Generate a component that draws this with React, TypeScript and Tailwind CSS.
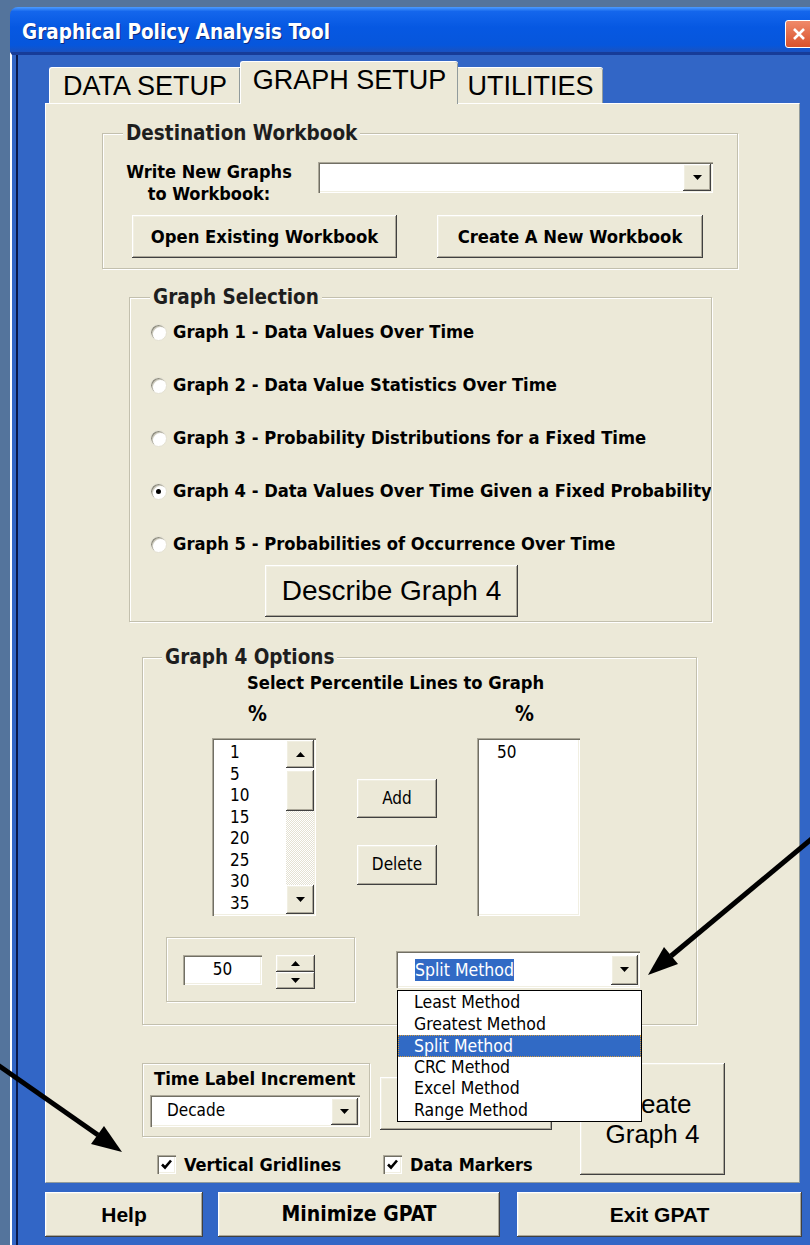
import React from "react";

const TAH = "font-['DejaVu_Sans_Condensed','DejaVu_Sans',sans-serif]";
const ARIAL = "font-['Liberation_Sans',Arial,sans-serif]";
const RAISED =
  "bg-[#ece9d8] shadow-[inset_-1px_-1px_#404040,inset_1px_1px_#ffffff,inset_-2px_-2px_#aca899,inset_2px_2px_#f1efe2]";
const SUNKEN =
  "bg-white shadow-[inset_1px_1px_#aca899,inset_2px_2px_#716f64,inset_-1px_-1px_#ffffff,inset_-2px_-2px_#f1efe2]";
const ETCHED = "border border-[#c3c0ae] shadow-[inset_1px_1px_#ffffff,1px_1px_#ffffff]";

function Tri({ up = false }: { up?: boolean }) {
  return (
    <svg width="9" height="5" viewBox="0 0 9 5">
      <path d={up ? "M0 5h9L4.5 0z" : "M0 0h9L4.5 5z"} fill="#000" />
    </svg>
  );
}

function Btn({ className = "", children }: { className?: string; children?: React.ReactNode }) {
  return <div className={`${RAISED} flex items-center justify-center text-black ${className}`}>{children}</div>;
}

function Group({
  className,
  legend,
  legendPos,
  children,
}: {
  className: string;
  legend: string;
  legendPos: string;
  children: React.ReactNode;
}) {
  return (
    <div className={`relative ${ETCHED} ${className}`}>
      <div
        className={`absolute -top-[12px] ${legendPos} px-[3px] bg-[#ece9d8] ${TAH} font-bold text-[20.5px] leading-[22px] text-[#1e1e1e]`}
      >
        {legend}
      </div>
      {children}
    </div>
  );
}

function Radio({ on = false }: { on?: boolean }) {
  return (
    <div className="w-[17px] h-[17px] rounded-full bg-white shadow-[inset_1px_1px_#8f8d80,inset_2px_2px_#cfcdc0,inset_-1px_-1px_#ffffff] border border-[#e4e1d2] flex items-center justify-center shrink-0">
      {on && <div className="w-[5px] h-[5px] rounded-full bg-black" />}
    </div>
  );
}

function Check() {
  return (
    <div className={`${SUNKEN} w-[19px] h-[19px] flex items-center justify-center shrink-0`}>
      <svg width="13" height="13" viewBox="0 0 13 13">
        <path d="M2 6.5 L5 9.5 L11 2.5" stroke="#000" strokeWidth="2.6" fill="none" />
      </svg>
    </div>
  );
}

const graphs = [
  "Graph 1 - Data Values Over Time",
  "Graph 2 - Data Value Statistics Over Time",
  "Graph 3 - Probability Distributions for a Fixed Time",
  "Graph 4 - Data Values Over Time Given a Fixed Probability",
  "Graph 5 - Probabilities of Occurrence Over Time",
];

const percentiles = ["1", "5", "10", "15", "20", "25", "30", "35"];

const methods = ["Least Method", "Greatest Method", "Split Method", "CRC Method", "Excel Method", "Range Method"];

export default function App() {
  return (
    <div className="relative w-[810px] h-[1245px] overflow-hidden bg-[#54749c]">
      <div className="ml-[10px] mt-[7px] w-[800px]">
        {/* title bar */}
        <div className="flex items-center h-[45px] rounded-tl-[8px] pl-[12px] bg-[linear-gradient(to_bottom,#4d9cff_0%,#1466ec_10%,#0658e2_45%,#0656dc_85%,#1a52c0_100%)]">
          <span className={`${TAH} font-bold text-[20.5px] pt-[6px] text-white [text-shadow:1px_1px_#0b2a80]`}>
            Graphical Policy Analysis Tool
          </span>
          <div className="ml-auto mt-[9px] -mr-[3px] w-[28px] h-[28px] rounded-[3px] border border-white bg-[linear-gradient(to_bottom,#f08a6a,#d8512c)] flex items-center justify-center">
            <svg width="14" height="14" viewBox="0 0 14 14">
              <path d="M2 2 L12 12 M12 2 L2 12" stroke="#fff" strokeWidth="2.6" />
            </svg>
          </div>
        </div>

        {/* window frame */}
        <div className="border-l-2 border-l-white border-t-[3px] border-t-[#173c98] bg-[#3266c6] pl-[4px] h-[1200px]">
          <div className="border-l-2 border-l-[#0b1a4a] h-full pl-[27px]">
            {/* tabs */}
            <div className={`flex items-end ml-[4px] pt-[6px] h-[48px] ${ARIAL} text-[27px] text-black`}>
              <div className="w-[191px] h-[36px] bg-[#ece9d8] border-t border-l border-white shadow-[inset_-1px_0_#919b9c] rounded-tl-[3px] flex items-center justify-center pt-[2px]">
                DATA SETUP
              </div>
              <div className="relative top-[1px] z-10 w-[218px] h-[43px] bg-[#ece9d8] border-t border-l border-white shadow-[inset_-1px_0_#919b9c] rounded-t-[3px] flex items-center justify-center pb-[5px]">
                GRAPH SETUP
              </div>
              <div className="w-[145px] h-[36px] bg-[#ece9d8] border-t border-white shadow-[inset_-1px_0_#919b9c] rounded-tr-[3px] flex items-center justify-center pt-[2px]">
                UTILITIES
              </div>
            </div>

            {/* tab page */}
            <div className="w-[755px] h-[1080px] bg-[#ece9d8] border-t border-l border-white border-r border-b border-r-[#919b9c] border-b-[#919b9c] flex flex-col items-start">
              {/* destination workbook */}
              <Group className="ml-[56px] mt-[29px] w-[636px] h-[136px]" legend="Destination Workbook" legendPos="left-[20px]">
                <div className="flex pl-[23px] pt-[27px]">
                  <div className={`${TAH} font-bold text-[18px] leading-[22px] text-center w-[166px] text-black`}>
                    Write New Graphs
                    <br />
                    to Workbook:
                  </div>
                  <div className={`${SUNKEN} ml-[26px] mt-[1px] w-[395px] h-[31px] flex justify-end items-center pr-[2px]`}>
                    <div className={`${RAISED} w-[28px] h-[27px] flex items-center justify-center`}>
                      <Tri />
                    </div>
                  </div>
                </div>
                <div className={`flex pl-[29px] mt-[10px] ${TAH} font-bold text-[18.3px]`}>
                  <Btn className="w-[265px] h-[43px]">Open Existing Workbook</Btn>
                  <Btn className="ml-[40px] w-[266px] h-[43px]">Create A New Workbook</Btn>
                </div>
              </Group>

              {/* graph selection */}
              <Group className="ml-[83px] mt-[28px] w-[583px] h-[325px]" legend="Graph Selection" legendPos="left-[20px]">
                <div className={`overflow-hidden w-full pt-[22px] pl-[20px] flex flex-col gap-[29px] ${TAH} font-bold text-[18.2px] text-black`}>
                  {graphs.map((g, i) => (
                    <div key={g} className="h-[24px] flex items-center whitespace-nowrap">
                      <Radio on={i === 3} />
                      <span className="ml-[6px]">{g}</span>
                    </div>
                  ))}
                </div>
                <Btn className={`ml-[135px] mt-[9px] w-[253px] h-[52px] ${ARIAL} text-[28px]`}>Describe Graph 4</Btn>
              </Group>

              {/* graph 4 options */}
              <Group className="ml-[96px] mt-[35px] w-[555px] h-[368px]" legend="Graph 4 Options" legendPos="left-[19px]">
                <div className={`ml-[104px] mt-[15px] ${TAH} font-bold text-[18.2px] leading-[20px] text-black`}>
                  Select Percentile Lines to Graph
                </div>
                <div className={`flex ml-[105px] mt-[11px] ${TAH} font-bold text-[21px] leading-[20px] text-black`}>
                  <span className="w-[267px]">%</span>
                  <span>%</span>
                </div>
                <div className="flex ml-[69px] mt-[14px]">
                  {/* available percentiles */}
                  <div className={`${SUNKEN} w-[104px] h-[178px] flex p-[2px] overflow-hidden`}>
                    <div className={`flex-1 pl-[16px] pt-[2px] ${TAH} text-[17px] leading-[21.5px] text-black`}>
                      {percentiles.map((p) => (
                        <div key={p}>{p}</div>
                      ))}
                    </div>
                    <div className="w-[28px] flex flex-col">
                      <div className={`${RAISED} h-[28px] flex items-center justify-center`}>
                        <Tri up />
                      </div>
                      <div className={`${RAISED} mt-[2px] h-[41px]`} />
                      <div className="flex-1 bg-[repeating-conic-gradient(#ffffff_0%_25%,#e4e1d2_0%_50%)] bg-[length:2px_2px]" />
                      <div className={`${RAISED} h-[29px] flex items-center justify-center`}>
                        <Tri />
                      </div>
                    </div>
                  </div>
                  <div className={`ml-[41px] pt-[41px] flex flex-col ${TAH} text-[17px]`}>
                    <Btn className="w-[80px] h-[39px]">Add</Btn>
                    <Btn className="mt-[27px] w-[80px] h-[40px]">Delete</Btn>
                  </div>
                  {/* chosen percentiles */}
                  <div className={`${SUNKEN} ml-[40px] w-[103px] h-[178px] pl-[20px] pt-[4px] ${TAH} text-[17px] leading-[21.5px] text-black`}>
                    50
                  </div>
                </div>
                <div className="flex ml-[23px] mt-[21px]">
                  {/* spin value */}
                  <div className={`w-[189px] h-[65px] ${ETCHED} flex items-start pl-[16px] pt-[17px]`}>
                    <div className={`${SUNKEN} w-[79px] h-[30px] flex items-center justify-center ${TAH} text-[17px] text-black`}>
                      50
                    </div>
                    <div className="ml-[14px] w-[39px] flex flex-col">
                      <div className={`${RAISED} h-[17px] flex items-center justify-center`}>
                        <Tri up />
                      </div>
                      <div className={`${RAISED} h-[17px] flex items-center justify-center`}>
                        <Tri />
                      </div>
                    </div>
                  </div>
                  {/* method combo with open list */}
                  <div className="relative ml-[41px] mt-[14px] w-[244px] h-[37px]">
                    <div className={`${SUNKEN} w-full h-full flex items-center pl-[19px] pr-[2px] ${TAH} text-[17.5px]`}>
                      <span className="bg-[#316ac5] text-white leading-[22px]">Split Method</span>
                      <div className={`${RAISED} ml-auto w-[27px] h-[30px] flex items-center justify-center`}>
                        <Tri />
                      </div>
                    </div>
                    <div className={`absolute left-[1px] top-[39px] z-20 w-[245px] h-[132px] border border-black bg-white py-[1px] ${TAH} text-[17.5px] text-black`}>
                      {methods.map((m) => (
                        <div
                          key={m}
                          className={
                            m === "Split Method"
                              ? "h-[21.6px] leading-[20px] pl-[15px] bg-[#316ac5] text-white border border-dotted border-[#d49a3a]"
                              : "h-[21.6px] leading-[21.6px] pl-[16px]"
                          }
                        >
                          {m}
                        </div>
                      ))}
                    </div>
                  </div>
                </div>
              </Group>

              {/* bottom controls */}
              <div className="flex ml-[96px] mt-[38px]">
                <div className="w-[438px] flex flex-col">
                  <div className="flex items-start">
                    <div className={`w-[228px] h-[74px] ${ETCHED}`}>
                      <div className={`${TAH} font-bold text-[18.3px] leading-[20px] pl-[11px] pt-[5px] text-black`}>
                        Time Label Increment
                      </div>
                      <div className={`${SUNKEN} ml-[7px] mt-[6px] w-[210px] h-[32px] flex items-center pl-[17px] pr-[2px] ${TAH} text-[17px] text-black`}>
                        Decade
                        <div className={`${RAISED} ml-auto w-[27px] h-[27px] flex items-center justify-center`}>
                          <Tri />
                        </div>
                      </div>
                    </div>
                    <Btn className="ml-[10px] mt-[14px] w-[172px] h-[53px]" />
                  </div>
                  <div className={`flex items-center mt-[14px] ml-[15px] ${TAH} font-bold text-[18px] text-black`}>
                    <div className="flex items-center w-[226px]">
                      <Check />
                      <span className="ml-[8px]">Vertical Gridlines</span>
                    </div>
                    <div className="flex items-center">
                      <Check />
                      <span className="ml-[8px]">Data Markers</span>
                    </div>
                  </div>
                </div>
                <Btn className={`w-[145px] h-[112px] flex-col ${ARIAL} text-[26px] leading-[30px]`}>
                  <span>Create</span>
                  <span>Graph 4</span>
                </Btn>
              </div>
            </div>

            {/* command buttons */}
            <div className={`flex mt-[9px] text-[21px] font-bold`}>
              <Btn className={`w-[158px] h-[45px] ${ARIAL}`}>Help</Btn>
              <Btn className={`ml-[15px] w-[282px] h-[45px] ${TAH} text-[21px]`}>Minimize GPAT</Btn>
              <Btn className={`ml-[17px] w-[285px] h-[45px] ${ARIAL}`}>Exit GPAT</Btn>
            </div>
          </div>
        </div>
      </div>

      {/* callout arrows */}
      <svg className="absolute left-0 top-0 z-30 pointer-events-none" width="810" height="1245" viewBox="0 0 810 1245">
        <line x1="-5" y1="1063" x2="98" y2="1135" stroke="#000" strokeWidth="5" />
        <polygon points="122,1152 91,1144 104,1126" fill="#000" />
        <line x1="815" y1="836" x2="671" y2="956" stroke="#000" strokeWidth="5" />
        <polygon points="648,975 664,947 678,964" fill="#000" />
      </svg>
    </div>
  );
}
